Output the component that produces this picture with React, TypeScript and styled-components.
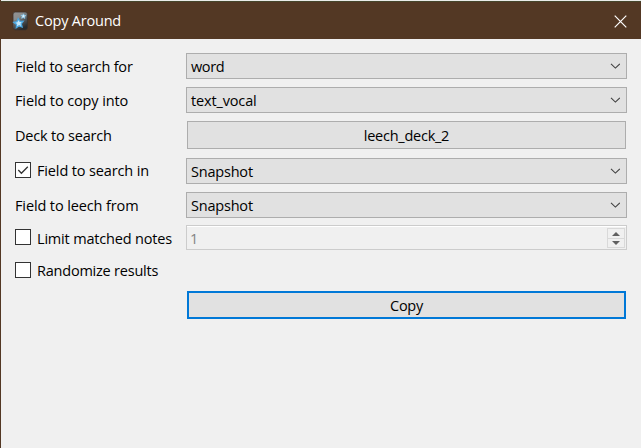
import React from "react";
import styled, { createGlobalStyle } from "styled-components";

const GlobalStyle = createGlobalStyle`
  *, *::before, *::after { box-sizing: border-box; }
  body { margin: 0; background: #f0f0f0; }
`;

const Window = styled.div`
  width: 641px;
  height: 448px;
  overflow: hidden;
  display: flex;
  flex-direction: column;
  background: #f0f0f0;
  border-left: 1px solid #533824;
  font-family: "Open Sans", "Noto Sans", sans-serif;
  font-size: 14.5px;
  line-height: 20px;
  color: #000;
`;

const TitleBar = styled.header`
  flex: none;
  height: 39px;
  display: flex;
  align-items: center;
  padding: 2px 14px 0 11px;
  background: #533824;
  border-top: 1px solid #e9ece9;
  box-shadow: inset 0 1px #46462c;
  color: #fff;
`;

const Text = styled.span<{ $spacing?: number; $drop?: number }>`
  white-space: pre;
  letter-spacing: ${(p) => p.$spacing ?? -0.3}px;
  padding-top: ${(p) => (p.$drop ?? 1) * 2}px;
`;

const Title = styled(Text)`
  flex: 1;
  margin-left: 7px;
`;

const Form = styled.main`
  display: flex;
  flex-direction: column;
  padding: 14px 14px 0;
`;

const Row = styled.div<{ $height: number; $gap: number }>`
  display: grid;
  grid-template-columns: 171px 441px;
  grid-template-rows: 100%;
  align-items: center;
  height: ${(p) => p.$height}px;
  margin-bottom: ${(p) => p.$gap}px;
`;

const Label = styled.label`
  display: flex;
  align-items: center;
  gap: 6px;
`;

const CheckBox = styled.span`
  width: 16px;
  height: 16px;
  margin-bottom: 2px;
  border: 1px solid #333;
  background: #fff;
  display: flex;
  svg { display: block; }
`;

const Combo = styled.div`
  height: 26px;
  display: flex;
  align-items: center;
  justify-content: space-between;
  padding: 0 6px 0 4px;
  background: #e1e1e1;
  border: 1px solid #adadad;
`;

const Button = styled.button<{ $primary?: boolean }>`
  height: 28px;
  margin: 0 1px;
  padding: 0;
  display: flex;
  align-items: center;
  justify-content: center;
  background: #e1e1e1;
  border: ${(p) => (p.$primary ? "2px solid #0078d7" : "1px solid #adadad")};
  border-radius: 0;
  font: inherit;
  color: #000;
`;

const SpinBox = styled.div`
  height: 25px;
  display: flex;
  align-items: center;
  justify-content: space-between;
  padding: 0 1px 0 3px;
  background: #f0f0f0;
  border: 1px solid #ccc;
  box-shadow: inset 0 1px #fff;
  color: #838383;
`;

const Stepper = styled.span`
  width: 18px;
  height: 20px;
  margin-top: 1px;
  display: grid;
  grid-template-rows: 9px 9px;
  border: 1px solid #d9d9d9;
`;

const Step = styled.span`
  display: flex;
  align-items: center;
  justify-content: center;
  & + & { border-top: 1px solid #d9d9d9; }
`;

const AppIcon = () => (
  <svg width="16" height="20" viewBox="0 0 16 20">
    <defs>
      <linearGradient id="tile" x1="0" y1="0" x2="0.5" y2="1">
        <stop offset="0" stopColor="#8a8a89" />
        <stop offset="0.48" stopColor="#777a7b" />
        <stop offset="0.65" stopColor="#55585a" />
        <stop offset="1" stopColor="#292a2b" />
      </linearGradient>
    </defs>
    <rect x="1" y="1" width="14.5" height="18" rx="2.4" fill="url(#tile)" stroke="#39312b" strokeWidth=".6" />
    <path d="M2 3.2Q2 2 4 2h8Q8 8 2 9.5z" fill="#aaa" opacity=".35" />
    <path d="m6.2 7.6 1.8 2.7 3.2-.1-2 2.6.9 3.2-3-1.2-2.8 1.9.2-3.3-2.7-2 3.2-.8z" fill="#c5e8fb" stroke="#4ba6df" strokeWidth="1.3" />
    <path d="m11.6 2.8.6 1.5 1.8.2-1.4 1.2.3 1.8-1.6-.9-1.7.7.5-1.7-1.2-1.3 1.8-.1z" fill="#dff3ff" stroke="#7cc4ed" strokeWidth=".7" />
  </svg>
);

const CloseIcon = () => (
  <svg width="13" height="13" viewBox="0 0 13 13">
    <path d="M.7.7l11.6 11.6M12.3.7.7 12.3" stroke="#fff" strokeWidth="1.2" />
  </svg>
);

const Chevron = () => (
  <svg width="10" height="6" viewBox="0 0 10 6">
    <path d="m1 .9 4.4 4.2L9.8.9" fill="none" stroke="#404040" strokeWidth="1.1" />
  </svg>
);

const Check = () => (
  <svg width="14" height="14" viewBox="0 0 14 14">
    <path d="m2.3 7 3.1 3.2 6.4-6.5" fill="none" stroke="#333" strokeWidth="1.3" />
  </svg>
);

const Arrow = ({ down = false }: { down?: boolean }) => (
  <svg width="8" height="4" viewBox="0 0 8 4">
    <path d={down ? "M0 0h8L4 4z" : "M0 4h8L4 0z"} fill="#606060" />
  </svg>
);

interface SelectProps {
  value: string;
  spacing: number;
}

const Select = ({ value, spacing }: SelectProps) => (
  <Combo>
    <Text $spacing={spacing}>{value}</Text>
    <Chevron />
  </Combo>
);

export default function App() {
  return (
    <>
      <GlobalStyle />
      <Window>
        <TitleBar>
          <AppIcon />
          <Title $spacing={-0.2} $drop={0}>Copy Around</Title>
          <CloseIcon />
        </TitleBar>
        <Form>
          <Row $height={26} $gap={8}>
            <Label><Text $spacing={-0.2}>Field to search for</Text></Label>
            <Select value="word" spacing={-0.4} />
          </Row>
          <Row $height={26} $gap={8}>
            <Label><Text $spacing={-0.12}>Field to copy into</Text></Label>
            <Select value="text_vocal" spacing={-0.15} />
          </Row>
          <Row $height={28} $gap={9}>
            <Label><Text $spacing={-0.2}>Deck to search</Text></Label>
            <Button><Text $spacing={-0.25}>leech_deck_2</Text></Button>
          </Row>
          <Row $height={26} $gap={8}>
            <Label>
              <CheckBox><Check /></CheckBox>
              <Text $spacing={-0.14} $drop={0}>Field to search in</Text>
            </Label>
            <Select value="Snapshot" spacing={-0.2} />
          </Row>
          <Row $height={26} $gap={6}>
            <Label><Text $spacing={-0.12}>Field to leech from</Text></Label>
            <Select value="Snapshot" spacing={-0.2} />
          </Row>
          <Row $height={27} $gap={10}>
            <Label>
              <CheckBox />
              <Text $spacing={-0.18}>Limit matched notes</Text>
            </Label>
            <SpinBox>
              <Text>1</Text>
              <Stepper>
                <Step><Arrow /></Step>
                <Step><Arrow down /></Step>
              </Stepper>
            </SpinBox>
          </Row>
          <Row $height={20} $gap={10}>
            <Label>
              <CheckBox />
              <Text $spacing={-0.22} $drop={0}>Randomize results</Text>
            </Label>
          </Row>
          <Row $height={28} $gap={0}>
            <span />
            <Button $primary><Text>Copy</Text></Button>
          </Row>
        </Form>
      </Window>
    </>
  );
}
